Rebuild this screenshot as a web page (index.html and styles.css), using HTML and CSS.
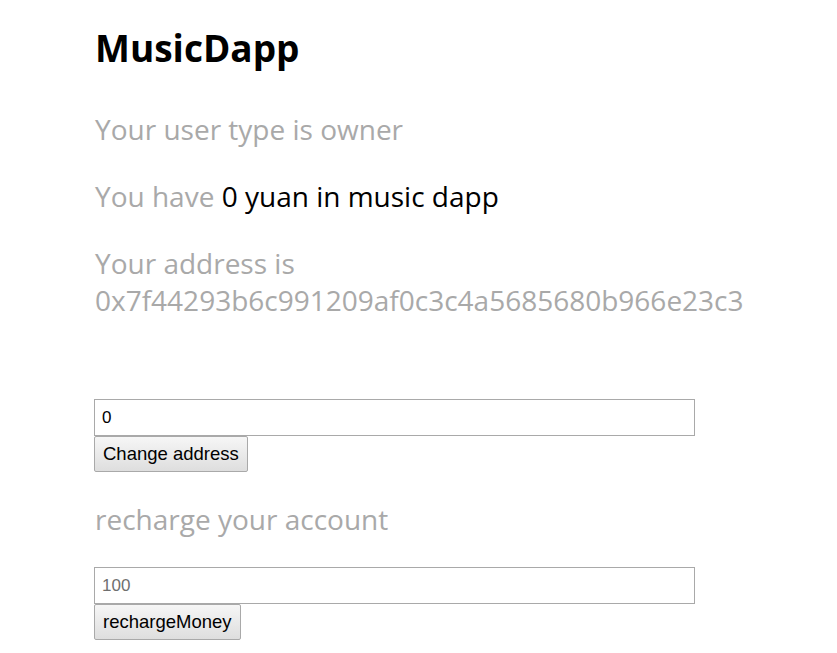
FILE: index.html
```html
<!DOCTYPE html>
<html>
<head>
<meta charset="utf-8">
<title>MusicDapp</title>
<link rel="stylesheet" href="styles.css">
</head>
<body>
<div class="page">
  <h1 class="title">MusicDapp</h1>
  <p class="info">Your user type is owner</p>
  <p class="info">You have <span class="value">0 yuan in music dapp</span></p>
  <p class="info address">Your address is<br>0x7f44293b6c991209af0c3c4a5685680b966e23c3</p>

  <form class="field change">
    <input class="text-input" type="text" value="0">
    <button class="btn" type="button">Change address</button>
  </form>

  <p class="info recharge">recharge your account</p>

  <form class="field">
    <input class="text-input" type="text" placeholder="100">
    <button class="btn" type="button">rechargeMoney</button>
  </form>
</div>
</body>
</html>
```

FILE: styles.css
```css
html, body {
  margin: 0;
  padding: 0;
  background: #ffffff;
}

.page {
  padding: 28px 0 0 94px;
  font-family: "Open Sans", "Noto Sans", sans-serif;
}

.title {
  margin: 0 0 43px 0;
  font-size: 37px;
  line-height: 40px;
  font-weight: 700;
  color: #000;
  padding-left: 1px;
}

.info {
  margin: 0 0 30px 0;
  font-size: 28px;
  line-height: 37px;
  color: #a9a9a9;
  padding-left: 1px;
}

.value {
  color: #000;
}

.address {
  margin-bottom: 80px;
}

.recharge {
  margin-bottom: 29px;
}

.field {
  display: flex;
  flex-direction: column;
  align-items: flex-start;
  margin: 0 0 29px 0;
}

.text-input {
  box-sizing: border-box;
  width: 601px;
  height: 37px;
  margin: 0;
  padding: 0 7px;
  border: 1px solid #a9a9a9;
  font-family: "Liberation Sans", Arial, sans-serif;
  font-size: 17px;
  color: #000;
  outline: none;
}

.text-input::placeholder {
  color: #6f6f6f;
}

.btn {
  box-sizing: border-box;
  height: 36px;
  margin: 0;
  padding: 0 8px;
  border: 1px solid #a9a9a9;
  border-radius: 2px;
  background: linear-gradient(#f6f6f6, #dedede);
  font-family: "Liberation Sans", Arial, sans-serif;
  font-size: 18.5px;
  color: #000;
}
```
